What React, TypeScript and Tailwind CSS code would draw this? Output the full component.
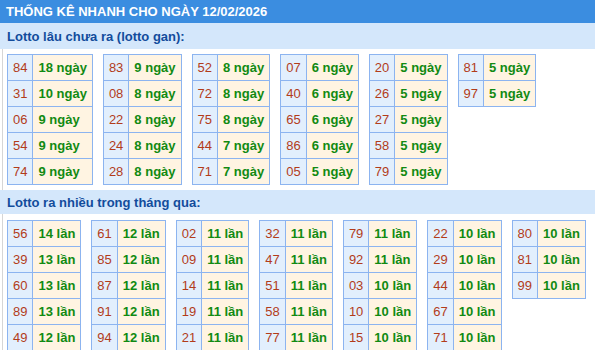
import React from "react";

type Item = { num: string; count: string };

const gan: Item[][] = [
  [
    { num: "84", count: "18 ngày" },
    { num: "31", count: "10 ngày" },
    { num: "06", count: "9 ngày" },
    { num: "54", count: "9 ngày" },
    { num: "74", count: "9 ngày" },
  ],
  [
    { num: "83", count: "9 ngày" },
    { num: "08", count: "8 ngày" },
    { num: "22", count: "8 ngày" },
    { num: "24", count: "8 ngày" },
    { num: "28", count: "8 ngày" },
  ],
  [
    { num: "52", count: "8 ngày" },
    { num: "72", count: "8 ngày" },
    { num: "75", count: "8 ngày" },
    { num: "44", count: "7 ngày" },
    { num: "71", count: "7 ngày" },
  ],
  [
    { num: "07", count: "6 ngày" },
    { num: "40", count: "6 ngày" },
    { num: "65", count: "6 ngày" },
    { num: "86", count: "6 ngày" },
    { num: "05", count: "5 ngày" },
  ],
  [
    { num: "20", count: "5 ngày" },
    { num: "26", count: "5 ngày" },
    { num: "27", count: "5 ngày" },
    { num: "58", count: "5 ngày" },
    { num: "79", count: "5 ngày" },
  ],
  [
    { num: "81", count: "5 ngày" },
    { num: "97", count: "5 ngày" },
  ],
];

const nhieu: Item[][] = [
  [
    { num: "56", count: "14 lần" },
    { num: "39", count: "13 lần" },
    { num: "60", count: "13 lần" },
    { num: "89", count: "13 lần" },
    { num: "49", count: "12 lần" },
  ],
  [
    { num: "61", count: "12 lần" },
    { num: "85", count: "12 lần" },
    { num: "87", count: "12 lần" },
    { num: "91", count: "12 lần" },
    { num: "94", count: "12 lần" },
  ],
  [
    { num: "02", count: "11 lần" },
    { num: "09", count: "11 lần" },
    { num: "14", count: "11 lần" },
    { num: "19", count: "11 lần" },
    { num: "21", count: "11 lần" },
  ],
  [
    { num: "32", count: "11 lần" },
    { num: "47", count: "11 lần" },
    { num: "51", count: "11 lần" },
    { num: "58", count: "11 lần" },
    { num: "77", count: "11 lần" },
  ],
  [
    { num: "79", count: "11 lần" },
    { num: "92", count: "11 lần" },
    { num: "03", count: "10 lần" },
    { num: "10", count: "10 lần" },
    { num: "15", count: "10 lần" },
  ],
  [
    { num: "22", count: "10 lần" },
    { num: "29", count: "10 lần" },
    { num: "44", count: "10 lần" },
    { num: "67", count: "10 lần" },
    { num: "71", count: "10 lần" },
  ],
  [
    { num: "80", count: "10 lần" },
    { num: "81", count: "10 lần" },
    { num: "99", count: "10 lần" },
  ],
];

const LottoTable = ({ rows }: { rows: Item[] }) => (
  <table className="border-collapse">
    <tbody>
      {rows.map((r) => (
        <tr key={r.num} className="h-[26px]">
          <td className="border border-[#8cb4f0] bg-[#e2effd] px-[5px] py-0 text-[#b23c1a]">
            {r.num}
          </td>
          <td className="border border-[#8cb4f0] bg-[#fff4e2] px-[5px] py-0 font-bold text-[#118a12] whitespace-nowrap">
            {r.count}
          </td>
        </tr>
      ))}
    </tbody>
  </table>
);

const SectionTitle = ({ children, h }: { children: React.ReactNode; h: string }) => (
  <div className={`flex items-center bg-[#d4e7fb] pl-[7px] font-bold text-[#124c9c] ${h}`}>
    {children}
  </div>
);

export default function App() {
  return (
    <div className="w-[595px] h-[350px] overflow-hidden bg-white text-[13px] leading-[15px] font-['Liberation_Sans',Arial,sans-serif]">
      <div className="flex h-[23px] items-center bg-[#3b8de0] pl-[6px] font-bold text-white">
        THỐNG KÊ NHANH CHO NGÀY 12/02/2026
      </div>

      <SectionTitle h="h-[26px]">Lotto lâu chưa ra (lotto gan):</SectionTitle>
      <div className="ml-[2px] border-l border-[#d6d6d6] pl-[4px] pt-[5px] pb-[5px]">
        <div className="flex items-start gap-x-[10px]">
          {gan.map((t, i) => (
            <LottoTable key={i} rows={t} />
          ))}
        </div>
      </div>

      <SectionTitle h="h-[24px]">Lotto ra nhiều trong tháng qua:</SectionTitle>
      <div className="ml-[2px] border-l border-[#d6d6d6] pl-[4px] pt-[6px]">
        <div className="flex items-start gap-x-[10px]">
          {nhieu.map((t, i) => (
            <LottoTable key={i} rows={t} />
          ))}
        </div>
      </div>
    </div>
  );
}
